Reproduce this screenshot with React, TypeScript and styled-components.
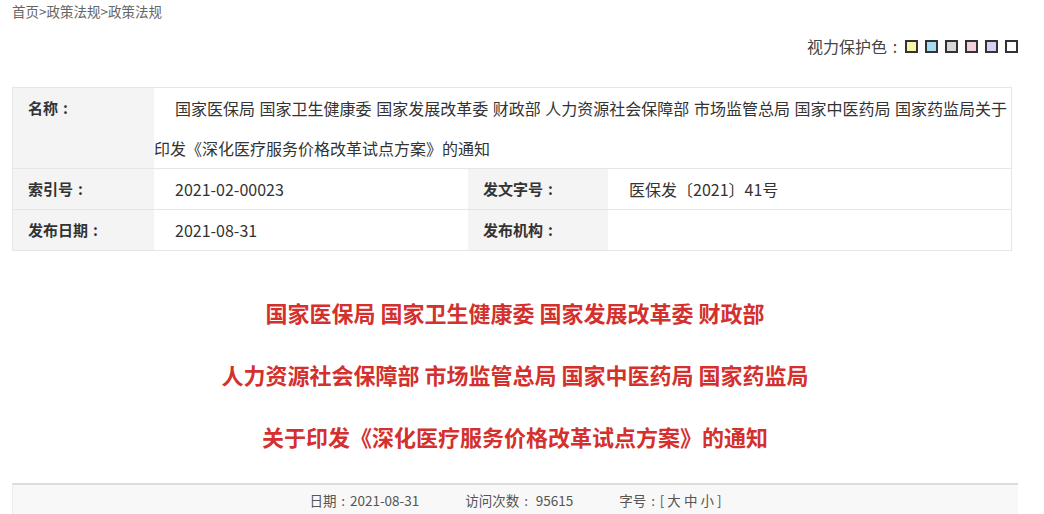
import React from 'react';
import styled, { createGlobalStyle } from 'styled-components';

const GlobalStyle = createGlobalStyle`
  html, body {
    margin: 0;
    padding: 0;
    background: #ffffff;
  }
  body {
    font-family: "Noto Sans CJK SC", "Liberation Sans", sans-serif;
    color: #333;
  }
`;

const swatches = ['#f8f6a6', '#a9dcf0', '#d8d8d8', '#f3d1dc', '#dccdf3', '#ffffff'];

// full-width colon with the dots centred, as the original page font draws it
const C = () => <Colon>:</Colon>;

const App: React.FC = () => {
  return (
    <>
      <GlobalStyle />
      <Page>
        <Breadcrumb>首页&gt;政策法规&gt;政策法规</Breadcrumb>
        <EyeBar>
          <span>视力保护色<C /></span>
          <Swatches>
            {swatches.map(c => (
              <Swatch key={c} color={c} />
            ))}
          </Swatches>
        </EyeBar>

        <InfoTable>
          <Row>
            <Label>名称<C /></Label>
            <Value $span={3} $indent>
              国家医保局 国家卫生健康委 国家发展改革委 财政部 人力资源社会保障部 市场监管总局 国家中医药局 国家药监局关于
              <br />
              印发《深化医疗服务价格改革试点方案》的通知
            </Value>
          </Row>
          <Row>
            <Label>索引号<C /></Label>
            <Value>2021-02-00023</Value>
            <Label>发文字号<C /></Label>
            <Value>医保发〔2021〕41号</Value>
          </Row>
          <Row $last>
            <Label>发布日期<C /></Label>
            <Value>2021-08-31</Value>
            <Label>发布机构<C /></Label>
            <Value />
          </Row>
        </InfoTable>

        <Title>
          <TitleLine>国家医保局 国家卫生健康委 国家发展改革委 财政部</TitleLine>
          <TitleLine>人力资源社会保障部 市场监管总局 国家中医药局 国家药监局</TitleLine>
          <TitleLine>关于印发《深化医疗服务价格改革试点方案》的通知</TitleLine>
        </Title>

        <Footer>
          <span>日期<C />2021-08-31</span>
          <span>访问次数<C /> 95615</span>
          <span>字号<C />[ 大 中 小 ]</span>
        </Footer>
      </Page>
    </>
  );
};

const Page = styled.div`
  width: 1006px;
  padding: 0 0 0 12px;
`;

const Colon = styled.span`
  display: inline-block;
  width: 1em;
  text-align: center;
  text-indent: 0;
`;

const Breadcrumb = styled.div`
  height: 22px;
  line-height: 22px;
  font-size: 13.5px;
  color: #666;
`;

const EyeBar = styled.div`
  margin-top: 12px;
  height: 24px;
  display: flex;
  justify-content: flex-end;
  align-items: center;
  font-size: 16px;
  color: #444;
`;

const Swatches = styled.div`
  display: flex;
  gap: 7px;
  margin-left: 2px;
`;

const Swatch = styled.div<{ color: string }>`
  width: 9px;
  height: 9px;
  border: 2px solid #333;
  background: ${({ color }) => color};
`;

const InfoTable = styled.div`
  margin-top: 29px;
  width: 998px;
  border: 1px solid #e6e6e6;
`;

const Row = styled.div<{ $last?: boolean }>`
  display: grid;
  grid-template-columns: 141px 314px 140px 403px;
  border-bottom: ${({ $last }) => ($last ? 'none' : '1px solid #e6e6e6')};
`;

const Label = styled.div`
  background: #f4f4f4;
  padding-left: 15px;
  line-height: 40px;
  font-size: 15px;
  font-weight: bold;
  color: #333;
`;

const Value = styled.div<{ $span?: number; $indent?: boolean }>`
  grid-column: ${({ $span }) => ($span ? `span ${$span}` : 'auto')};
  padding-left: ${({ $indent }) => ($indent ? '0' : '21px')};
  text-indent: ${({ $indent }) => ($indent ? '21px' : '0')};
  line-height: 40px;
  font-size: 16px;
  color: #333;
  white-space: nowrap;
  word-spacing: 1px;
  background: #fff;
`;

const Title = styled.div`
  margin-top: 30px;
  display: flex;
  flex-direction: column;
  align-items: center;
`;

const TitleLine = styled.div`
  line-height: 62px;
  font-size: 22px;
  font-weight: bold;
  color: #d3302e;
  white-space: nowrap;
`;

const Footer = styled.div`
  margin-top: 16px;
  height: 29px;
  border-top: 2px solid #dcdcdc;
  border-left: 1px solid #eeeeee;
  background: #f8f8f8;
  display: flex;
  justify-content: center;
  align-items: center;
  gap: 46px;
  font-size: 13.5px;
  color: #555;
`;

export default App;
